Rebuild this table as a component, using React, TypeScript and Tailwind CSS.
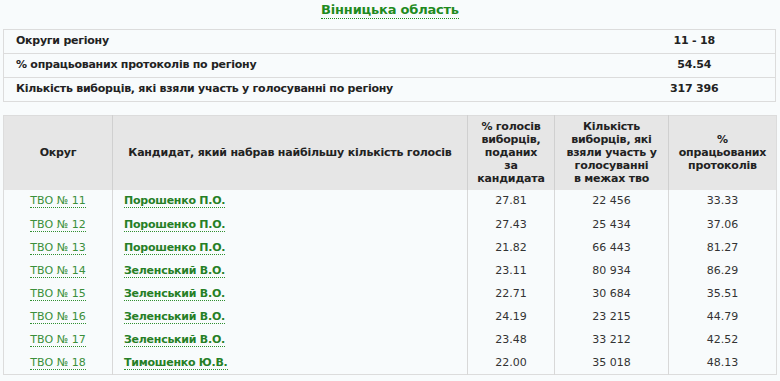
import React from "react";

const summary = [
  { label: "Округи регіону", value: "11 - 18" },
  { label: "% опрацьованих протоколів по регіону", value: "54.54" },
  { label: "Кількість виборців, які взяли участь у голосуванні по регіону", value: "317 396" },
];

const rows = [
  { tvo: "ТВО № 11", name: "Порошенко П.О.", pct: "27.81", voters: "22 456", done: "33.33" },
  { tvo: "ТВО № 12", name: "Порошенко П.О.", pct: "27.43", voters: "25 434", done: "37.06" },
  { tvo: "ТВО № 13", name: "Порошенко П.О.", pct: "21.82", voters: "66 443", done: "81.27" },
  { tvo: "ТВО № 14", name: "Зеленський В.О.", pct: "23.11", voters: "80 934", done: "86.29" },
  { tvo: "ТВО № 15", name: "Зеленський В.О.", pct: "22.71", voters: "30 684", done: "35.51" },
  { tvo: "ТВО № 16", name: "Зеленський В.О.", pct: "24.19", voters: "23 215", done: "44.79" },
  { tvo: "ТВО № 17", name: "Зеленський В.О.", pct: "23.48", voters: "33 212", done: "42.52" },
  { tvo: "ТВО № 18", name: "Тимошенко Ю.В.", pct: "22.00", voters: "35 018", done: "48.13" },
];

const link = "border-b border-dotted border-[#2f8f2f] leading-[13px]";

const App = () => {
  return (
    <div className="w-[780px] h-[381px] overflow-hidden bg-[#f8fbfc] font-['DejaVu_Sans',Verdana,sans-serif] text-[11px] text-[#222]">
      {/* Title */}
      <div className="flex justify-center pt-[2px] h-[29px]">
        <span className="text-[13px] font-bold tracking-[-0.2px] text-[#1f8a1f] border-b border-dotted border-[#1f8a1f] h-[17px] leading-[16px]">
          Вінницька область
        </span>
      </div>

      {/* Region summary */}
      <table className="ml-[3px] w-[773px] border-collapse border border-[#dcdcdc]">
        <tbody>
          {summary.map((s) => (
            <tr key={s.label} className="h-[24px] border-b border-[#dcdcdc]">
              <td className="pl-[12px] font-bold tracking-[-0.25px]">{s.label}</td>
              <td className="w-[162px] text-center font-bold tracking-[-0.2px]">{s.value}</td>
            </tr>
          ))}
        </tbody>
      </table>

      {/* Districts */}
      <table className="ml-[3px] mt-[13px] w-[773px] border-collapse border border-[#dcdcdc] table-fixed">
        <thead>
          <tr className="h-[74px] bg-[#e6e6e6] leading-[13px] tracking-[-0.2px]">
            <th className="w-[109px] border-r border-[#d0d0d0] font-bold">Округ</th>
            <th className="w-[355px] border-r border-[#d0d0d0] font-bold">Кандидат, який набрав найбільшу кількість голосів</th>
            <th className="w-[87px] border-r border-[#d0d0d0] font-bold">
              % голосів<br />виборців,<br />поданих<br />за<br />кандидата
            </th>
            <th className="w-[114px] border-r border-[#d0d0d0] font-bold">
              Кількість<br />виборців, які<br />взяли участь у<br />голосуванні<br />в межах тво
            </th>
            <th className="w-[108px] font-bold">
              %<br />опрацьованих<br />протоколів
            </th>
          </tr>
        </thead>
        <tbody>
          {rows.map((r, i) => (
            <tr key={r.tvo} className={i === 0 ? "h-[24px]" : "h-[23px]"}>
              <td className="border-r border-[#d8d8d8] text-center">
                <span className={`${link} text-[#3a8f3a]`}>{r.tvo}</span>
              </td>
              <td className="border-r border-[#d8d8d8] pl-[11px]">
                <span className={`${link} font-bold tracking-[-0.25px] text-[#267f26]`}>{r.name}</span>
              </td>
              <td className="border-r border-[#d8d8d8] text-center text-[#333]">{r.pct}</td>
              <td className="border-r border-[#d8d8d8] text-center text-[#333]">{r.voters}</td>
              <td className="text-center text-[#333]">{r.done}</td>
            </tr>
          ))}
        </tbody>
      </table>
    </div>
  );
};

export default App;
